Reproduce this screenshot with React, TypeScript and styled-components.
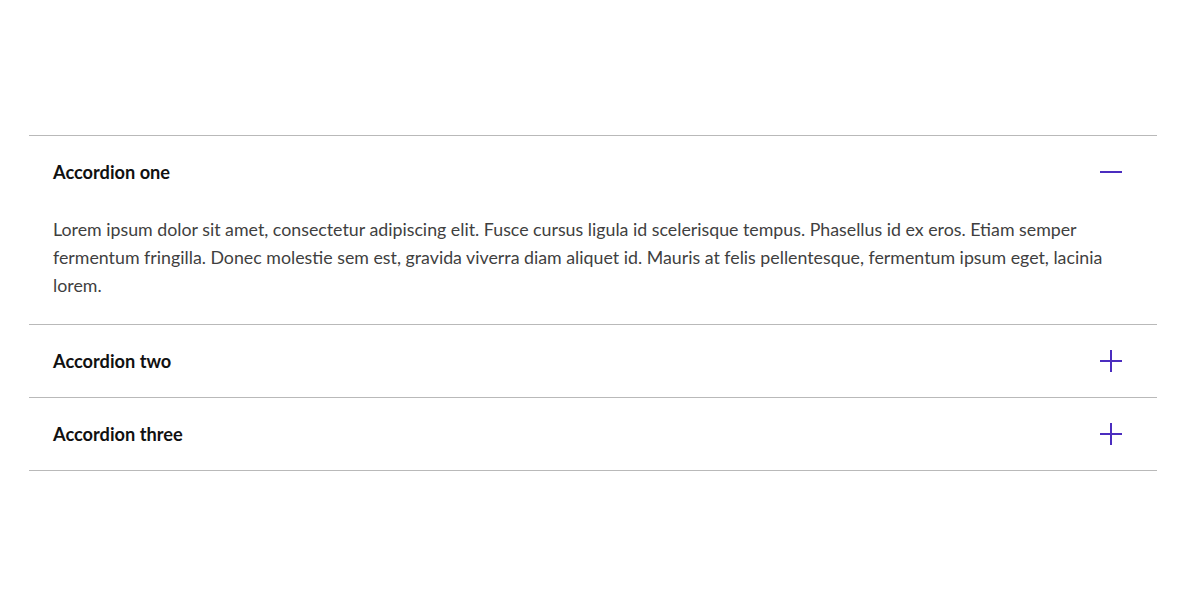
import React, { useState } from "react";
import styled, { createGlobalStyle } from "styled-components";

const Global = createGlobalStyle`
  html, body { margin: 0; padding: 0; background: #fff; }
  body { font-family: Lato, "Open Sans", sans-serif; }
`;

const Page = styled.div`
  padding: 135px 43px 0 29px;
`;

const List = styled.div`
  border-top: 1px solid #b9b9b9;
`;

const Item = styled.div`
  border-bottom: 1px solid #b9b9b9;
`;

const Header = styled.button`
  display: flex;
  align-items: center;
  justify-content: space-between;
  width: 100%;
  height: 72px;
  padding: 0 24px;
  border: 0;
  background: none;
  cursor: pointer;
  font-family: inherit;
  font-size: 18.2px;
  font-weight: 700;
  color: #111;
  text-align: left;
`;

const Icon = styled.svg`
  width: 24px;
  height: 24px;
  flex: none;
  margin-right: 10px;
`;

const Body = styled.div`
  padding: 7px 24px 25px 24px;
  font-size: 17.8px;
  line-height: 28px;
  color: #3f3f3f;
`;

const items = [
  {
    title: "Accordion one",
    body:
      "Lorem ipsum dolor sit amet, consectetur adipiscing elit. Fusce cursus ligula id scelerisque tempus. Phasellus id ex eros. Etiam semper fermentum fringilla. Donec molestie sem est, gravida viverra diam aliquet id. Mauris at felis pellentesque, fermentum ipsum eget, lacinia lorem.",
  },
  { title: "Accordion two", body: "Lorem ipsum dolor sit amet." },
  { title: "Accordion three", body: "Lorem ipsum dolor sit amet." },
];

export default function App() {
  const [open, setOpen] = useState(0);
  return (
    <Page>
      <Global />
      <List>
        {items.map((it, i) => (
          <Item key={it.title}>
            <Header onClick={() => setOpen(open === i ? -1 : i)}>
              {it.title}
              <Icon viewBox="0 0 24 24" fill="none" stroke="#4b2dbf" strokeWidth="2">
                <path d="M1 12h22" />
                {open !== i && <path d="M12 1v22" />}
              </Icon>
            </Header>
            {open === i && <Body>{it.body}</Body>}
          </Item>
        ))}
      </List>
    </Page>
  );
}
